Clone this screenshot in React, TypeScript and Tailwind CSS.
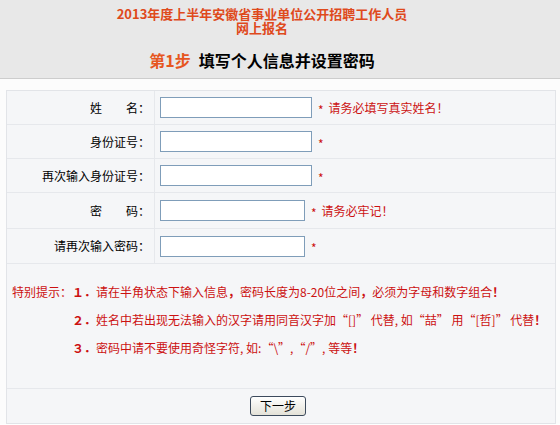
import React from 'react';

const rows = [
  { label: '姓　　名：', wide: true, tip: '请务必填写真实姓名！', h: 'h-[34px]' },
  { label: '身份证号：', wide: true, tip: '', h: 'h-[34px]' },
  { label: '再次输入身份证号：', wide: true, tip: '', h: 'h-[34px]' },
  { label: '密　　码：', wide: false, tip: '请务必牢记！', h: 'h-[36px]' },
  { label: '请再次输入密码：', wide: false, tip: '', h: 'h-[35px]' },
];

export default function App() {
  return (
    <div className="w-[560px] h-[425px] overflow-hidden bg-white text-[12px] text-black font-['Noto_Sans_CJK_SC',sans-serif]">
      {/* header */}
      <div className="h-[79px] bg-[#e8e8e8] border-b border-[#cdcdcd] flex flex-col items-center pr-[36px]">
        <div className="pt-[7px] text-[13px] leading-[14px] font-bold text-[#df4a1c] text-center">
          <div>2013年度上半年安徽省事业单位公开招聘工作人员</div>
          <div>网上报名</div>
        </div>
        <div className="mt-[16px] text-[16px] leading-[18px] font-bold">
          <span className="text-[#e6561f]">第1步</span>
          <span className="ml-[8px]">填写个人信息并设置密码</span>
        </div>
      </div>

      <div className="pl-[6px] pr-[4px] pt-[11px] bg-[#fcfcfc]">
        <div className="border border-[#e2e4e8] bg-[#f5f6f8]">
          {rows.map((r) => (
            <div key={r.label} className={`flex border-b border-[#e6e8ec] ${r.h}`}>
              <div className="w-[148px] shrink-0 border-r border-[#e6e8ec] flex items-center justify-end pr-[4px] leading-none">
                {r.label}
              </div>
              <div className="flex items-center pl-[5px]">
                <div className={`${r.wide ? 'w-[152px]' : 'w-[145px]'} h-[21px] border border-[#7f9db9] bg-white`} />
                <span className="ml-[6px] mt-[4px] text-[#cc1111] leading-none">*</span>
                {r.tip && <span className="ml-[5px] text-[#cc1111] leading-none">{r.tip}</span>}
              </div>
            </div>
          ))}

          <div className="h-[125px] border-b border-[#e6e8ec] pt-[14px] pl-[5px] flex text-[#cc1111] leading-[28px]">
            <div className="w-[60px] shrink-0">特别提示：</div>
            <div>
              <div><span className="font-bold">１．</span>请在半角状态下输入信息<span className="font-bold">，</span>密码长度为8-20位之间<span className="font-bold">，</span>必须为字母和数字组合<span className="font-bold">！</span></div>
              <div><span className="font-bold">２．</span>姓名中若出现无法输入的汉字请用同音汉字加“[]” 代替, 如“喆” 用“[哲]” 代替<span className="font-bold">！</span></div>
              <div><span className="font-bold">３．</span>密码中请不要使用奇怪字符, 如:“\”,“/”, 等等<span className="font-bold">！</span></div>
            </div>
          </div>

          <div className="h-[34px] flex items-center justify-center">
            <button className="ml-[-6px] w-[56px] h-[20px] rounded-[3px] border border-[#3c4a5c] bg-gradient-to-b from-white to-[#e4e2d8] text-[12px] leading-none text-black">
              下一步
            </button>
          </div>
        </div>
      </div>
    </div>
  );
}
